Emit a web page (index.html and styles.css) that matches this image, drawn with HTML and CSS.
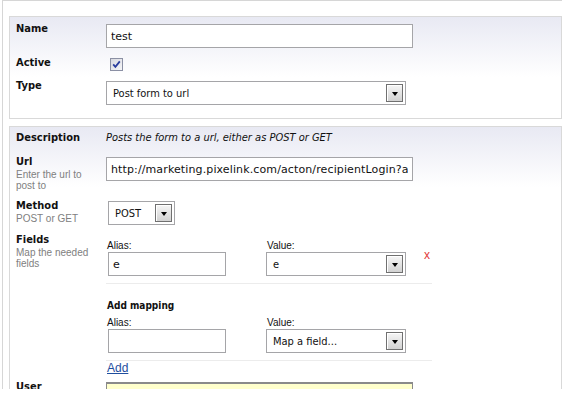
FILE: index.html
```html
<!DOCTYPE html>
<html lang="en">
<head>
    <meta charset="UTF-8">
    <title>Edit action</title>
    <link rel="stylesheet" href="styles.css">
</head>
<body>
<div class="frame">
    <div class="panel">
        <div class="row">
            <div class="label">Name</div>
            <div class="field"><input class="text" type="text" value="test"></div>
        </div>
        <div class="row">
            <div class="label">Active</div>
            <div class="field">
                <span class="check">
                    <svg width="13" height="13" viewBox="0 0 13 13">
                        <defs>
                            <linearGradient id="cb" x1="0" y1="0" x2="1" y2="1">
                                <stop offset="0" stop-color="#d6d7df"/>
                                <stop offset="1" stop-color="#f7f7f9"/>
                            </linearGradient>
                        </defs>
                        <rect x="0.5" y="0.5" width="12" height="12" fill="url(#cb)" stroke="#8b90a4"/>
                        <path d="M3.2 6.3 L5.4 8.8 L9.8 3.4" fill="none" stroke="#2a3d9e" stroke-width="1.8"/>
                    </svg>
                </span>
            </div>
        </div>
        <div class="row">
            <div class="label">Type</div>
            <div class="field">
                <div class="select type"><span>Post form to url</span><span class="arrow"></span></div>
            </div>
        </div>
    </div>

    <div class="panel">
        <div class="row desc">
            <div class="label">Description</div>
            <div class="note">Posts the form to a url, either as POST or GET</div>
        </div>
        <div class="row">
            <div class="label">Url<small>Enter the url to post to</small></div>
            <div class="field"><input class="text url" type="text" value="http://marketing.pixelink.com/acton/recipientLogin?aid=1234"></div>
        </div>
        <div class="row">
            <div class="label">Method<small>POST or GET</small></div>
            <div class="field">
                <div class="select method"><span>POST</span><span class="arrow"></span></div>
            </div>
        </div>
        <div class="row fields">
            <div class="label">Fields<small>Map the needed fields</small></div>
            <div class="mappings">
                <div class="mapping">
                    <div class="col alias">
                        <span class="cap">Alias:</span>
                        <input class="text short" type="text" value="e">
                    </div>
                    <div class="col">
                        <span class="cap">Value:</span>
                        <div class="select value"><span>e</span><span class="arrow"></span></div>
                    </div>
                    <a class="remove" href="#">x</a>
                </div>
                <div class="add-title">Add mapping</div>
                <div class="mapping new">
                    <div class="col alias">
                        <span class="cap">Alias:</span>
                        <input class="text short" type="text" value="">
                    </div>
                    <div class="col">
                        <span class="cap">Value:</span>
                        <div class="select value"><span>Map a field...</span><span class="arrow"></span></div>
                    </div>
                </div>
                <a class="add" href="#">Add</a>
            </div>
        </div>
        <div class="row">
            <div class="label">User</div>
            <div class="field"><input class="text user" type="text" value=""></div>
        </div>
    </div>
</div>
</body>
</html>
```

FILE: styles.css
```css
body {
    margin: 0;
    background: #fff;
    color: #111;
    font-family: "DejaVu Sans Condensed", "Liberation Sans", sans-serif;
    font-size: 11px;
}

.frame {
    margin-left: 2px;
    height: 389px;
    overflow: hidden;
    box-sizing: border-box;
    border-top: 1px solid #d6d6d6;
    border-left: 1px solid #d6d6d6;
    padding: 15px 0 0 6px;
}

.panel {
    border: 1px solid #d9d9d9;
    background: linear-gradient(#e8e9f3, #fff 60px);
    padding: 5px 6px 13px;
}
.panel + .panel { margin-top: 7px; padding-top: 4px; }

.row { display: flex; align-items: flex-start; margin-bottom: 8px; }
.row:last-child { margin-bottom: 0; }
.row.desc { margin-bottom: 10px; }
.row.fields { margin-bottom: 5px; }

.label {
    width: 90px;
    flex: none;
    font-weight: bold;
    font-size: 11px;
    line-height: 14px;
}
.label small {
    display: block;
    width: 80px;
    font-family: "Liberation Sans", sans-serif;
    font-weight: normal;
    font-size: 10px;
    line-height: 11px;
    color: #808080;
}

.field { padding-top: 2px; }

.note { font-style: italic; font-size: 11px; line-height: 14px; }

input.text {
    display: block;
    box-sizing: border-box;
    width: 307px;
    height: 24px;
    margin: 0;
    padding: 0 4px;
    border: 1px solid #a5a5a8;
    background: #fff;
    color: #111;
    font-family: "DejaVu Sans", sans-serif;
    font-size: 11px;
}
input.url { letter-spacing: 0.12px; }
input.short { width: 118px; margin-left: 2px; }
input.user {
    background: #ffffcc;
    border-color: #8a8a8a;
    border-top-width: 2px;
}

.check { display: block; margin-left: 4px; height: 13px; }
.check svg { display: block; }

.select {
    display: flex;
    align-items: center;
    justify-content: space-between;
    box-sizing: border-box;
    height: 24px;
    padding-left: 6px;
    border: 1px solid #a5a5a8;
    background: #fff;
    font-size: 11px;
}
.select.type { width: 300px; }
.select.method { width: 67px; margin-left: 2px; }
.select.value { width: 140px; }

.arrow {
    display: flex;
    align-items: center;
    justify-content: center;
    flex: none;
    box-sizing: border-box;
    width: 17px;
    height: 18px;
    margin-right: 2px;
    border: 1px solid #707070;
    background: linear-gradient(#f6f6f6, #d2d2d2);
    box-shadow: inset 1px 1px 0 #fff;
}
.arrow::after {
    content: "";
    margin-top: 1px;
    border-left: 3px solid transparent;
    border-right: 3px solid transparent;
    border-top: 4px solid #000;
}

.mappings { width: 330px; }
.mapping {
    display: flex;
    align-items: flex-start;
    width: 326px;
    padding: 7px 0;
    border-bottom: 1px solid #ececec;
}
.mapping.new { padding-top: 5px; }
.col { width: 160px; flex: none; }
.col + .col { width: 140px; }
.cap {
    display: block;
    padding-left: 1px;
    font-family: "Liberation Sans", sans-serif;
    font-size: 10px;
    line-height: 12px;
}

.remove {
    margin: 8px 0 0 18px;
    color: #e23b3b;
    font-family: "Liberation Sans", sans-serif;
    font-size: 12px;
    line-height: 14px;
    text-decoration: none;
}

.add-title {
    margin-top: 16px;
    padding-left: 1px;
    font-weight: bold;
    font-size: 10px;
    line-height: 12px;
}

.add {
    display: inline-block;
    padding-left: 1px;
    color: #1f4e9e;
    font-family: "Liberation Sans", sans-serif;
    font-size: 12px;
    line-height: 14px;
}
```
